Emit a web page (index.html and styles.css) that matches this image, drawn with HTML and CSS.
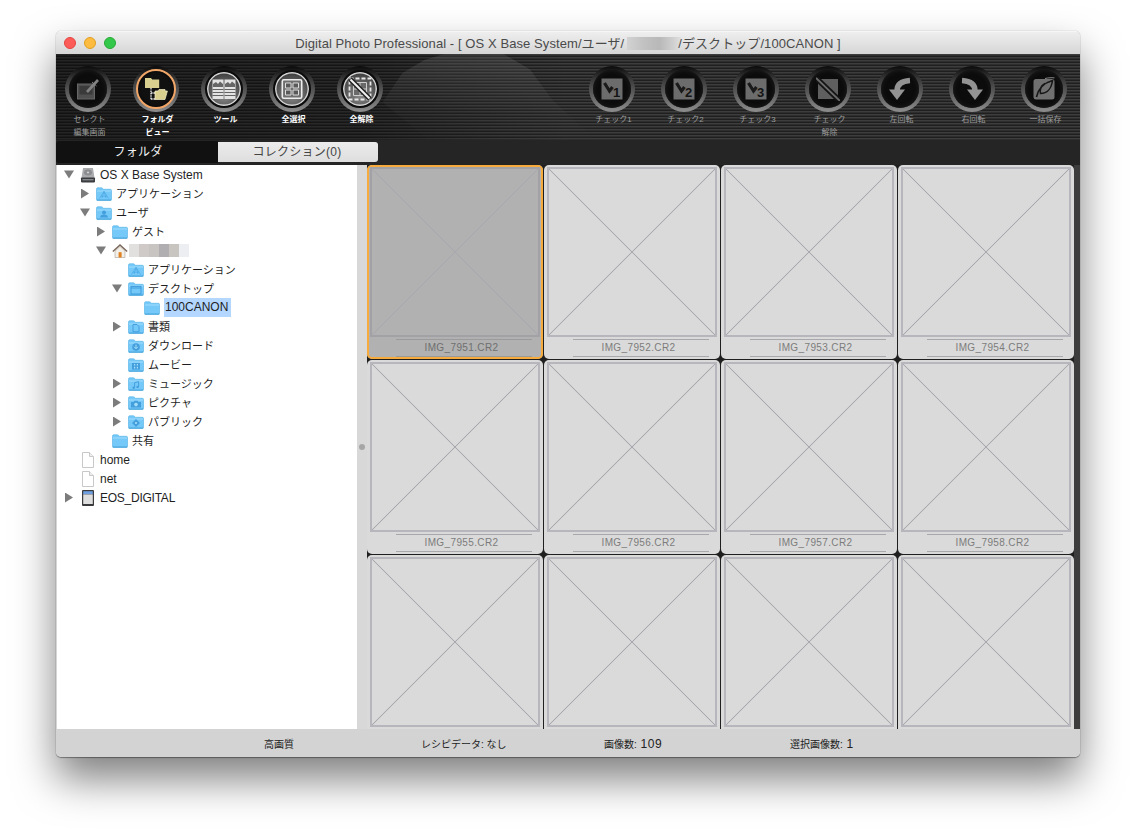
FILE: index.html
```html
<!DOCTYPE html>
<html lang="ja">
<head>
<meta charset="utf-8">
<title>Digital Photo Professional</title>
<link rel="stylesheet" href="styles.css">
</head>
<body>
<svg class="sprite" width="0" height="0" aria-hidden="true">
  <symbol id="folder" viewBox="0 0 16 14">
    <path d="M.5 2.2C.5 1.3 1 .8 1.8.8h3.6c.6 0 .9.2 1.2.6l.7.9h7c.8 0 1.2.5 1.2 1.2v8.8c0 .8-.5 1.2-1.2 1.2H1.7c-.8 0-1.2-.4-1.2-1.2z" fill="#74c9f9" stroke="#5fb7ea" stroke-width=".7"/>
    <path d="M1 4h14" stroke="#a8e0fa" stroke-width=".9"/>
    <path d="M.8 13h14.4" stroke="#4ba3dc" stroke-width="1"/>
  </symbol>
  <symbol id="g-app" viewBox="0 0 16 14"><path d="M3.4 11.5 8 4.4l4.6 7.1M5 9.2h6M8 4.4l-2 6.6M8 4.4l2 6.6" fill="none" stroke="#4aa6e2" stroke-width=".7"/></symbol>
  <symbol id="g-user" viewBox="0 0 16 14"><circle cx="8" cy="6.4" r="2" fill="#459fdc"/><path d="M4 11.5c.4-2.4 2-3 4-3s3.6.6 4 3z" fill="#459fdc"/></symbol>
  <symbol id="g-win" viewBox="0 0 16 14"><rect x="3" y="4.4" width="10" height="7.6" fill="none" stroke="#3f9cdb" stroke-width="1"/><path d="M3 6h10" stroke="#3f9cdb" stroke-width="1"/></symbol>
  <symbol id="g-doc" viewBox="0 0 16 14"><path d="M5 4.5h4l2 2v5.3H5z" fill="none" stroke="#459fdc" stroke-width="1"/></symbol>
  <symbol id="g-dl" viewBox="0 0 16 14"><circle cx="8" cy="8" r="3.8" fill="#459fdc"/><path d="M8 5.6v3.6M6.2 7.8 8 9.8l1.8-2" fill="none" stroke="#a4def9" stroke-width="1"/></symbol>
  <symbol id="g-mov" viewBox="0 0 16 14"><rect x="4" y="5" width="8" height="6.6" fill="#459fdc"/><path d="M6 6h1.2v1.6H6zM8.8 6H10v1.6H8.8zM6 8.8h1.2v1.6H6zM8.8 8.8H10v1.6H8.8z" fill="#a4def9"/></symbol>
  <symbol id="g-mus" viewBox="0 0 16 14"><path d="M6.6 10.8V5.6l4-1v5.2" fill="none" stroke="#459fdc" stroke-width="1"/><circle cx="5.6" cy="10.8" r="1.2" fill="#459fdc"/><circle cx="9.6" cy="9.9" r="1.2" fill="#459fdc"/></symbol>
  <symbol id="g-cam" viewBox="0 0 16 14"><path d="M3 6h2.6l.8-1.2h3.2L10.4 6H13v5.6H3z" fill="#459fdc"/><circle cx="8" cy="8.6" r="1.8" fill="#a4def9"/></symbol>
  <symbol id="g-pub" viewBox="0 0 16 14"><path d="M8 4 12 8l-4 4-4-4z" fill="#459fdc"/><circle cx="8" cy="8" r="1.1" fill="#a4def9"/></symbol>
  <symbol id="disk" viewBox="0 0 16 16">
    <path d="M3 1h10l1.5 10h-13z" fill="#a9abad"/>
    <ellipse cx="8" cy="5.4" rx="4" ry="3" fill="#8b8d90"/>
    <ellipse cx="8" cy="5.4" rx="1.2" ry=".9" fill="#cfd0d1"/>
    <rect x="1" y="10.4" width="14" height="5" rx=".8" fill="#3a3c40"/>
    <path d="M2.5 12.8h11" stroke="#a3a5a8" stroke-width="1"/>
  </symbol>
  <symbol id="home" viewBox="0 0 16 14">
    <path d="M3 7v6.5h10V7L8 2.5z" fill="#f2efe9" stroke="#a89f94" stroke-width=".6"/>
    <path d="M.8 7.6 8 1l7.2 6.6" fill="none" stroke="#7a6557" stroke-width="1.3"/>
    <rect x="6.6" y="8.2" width="3" height="5.3" fill="#e07f1f"/>
  </symbol>
  <symbol id="page" viewBox="0 0 16 16">
    <path d="M2.5.5h7l4 4v11h-11z" fill="#fff" stroke="#c8c8c8"/>
    <path d="M9.5.5v4h4" fill="#f0f0f0" stroke="#c8c8c8"/>
  </symbol>
  <symbol id="card" viewBox="0 0 16 16">
    <rect x="2" y="0" width="12" height="16" rx="1" fill="#3a3a3c"/>
    <rect x="3.2" y="1.2" width="9.6" height="3" fill="#6f9fe0"/>
    <rect x="3.2" y="4.4" width="9.6" height="9.6" fill="#dedede"/>
  </symbol>
  <symbol id="t-edit" viewBox="0 0 24 24">
    <rect x="1.5" y="7" width="17" height="15" fill="#4f4f4f" stroke="#676767" stroke-width="1"/>
    <rect x="3.5" y="9" width="13" height="8.5" fill="#3a3a3a"/>
    <path d="M11 15 22 3" stroke="#828282" stroke-width="2.6"/>
    <path d="M16 5l4.5 4" stroke="#828282" stroke-width="1"/>
  </symbol>
  <symbol id="t-folder" viewBox="0 0 24 24">
    <path d="M1 1h6l1.2 1.6h7V11H1z" fill="#d9d08f"/>
    <path d="M7 11v12M7 16h5M7 22h4" stroke="#eee" stroke-width="1.3" stroke-dasharray="1.6 .8" fill="none"/>
    <path d="M11 14h3l1-1.5h6V14h2.4l-2.4 8.5H11z" fill="#d9d08f" stroke="#f6f1c9" stroke-width=".7"/>
  </symbol>
  <symbol id="t-tool" viewBox="0 0 24 24">
    <rect x=".5" y="2.5" width="11" height="19.5" fill="#e3e3e3"/>
    <rect x="12.5" y="2.5" width="11" height="19.5" fill="#e3e3e3"/>
    <path d="M1 7 4 5l2 2 2-2.5 3 2.5v3H1zM13 7l3-2 2 2 2-2.5L23 7v3H13z" fill="#666"/>
    <path d="M.5 12.5h11M.5 15.5h11M.5 18.5h11M12.5 12.5h11M12.5 15.5h11M12.5 18.5h11" stroke="#555" stroke-width=".9"/>
  </symbol>
  <symbol id="t-all" viewBox="0 0 24 24">
    <rect x="2.300" y="2.800" width="19.400" height="18.400" rx="1.500" fill="#6e6e6e" stroke="#ececec" stroke-width="1.600"/>
    <path d="M5.500 6h5.500v5H5.500zM13 6h5.500v5H13zM5.500 13H11v5H5.500zM13 13h5.500v5H13z" fill="#595959" stroke="#dcdcdc" stroke-width="1"/>
  </symbol>
  <symbol id="t-none" viewBox="0 0 24 24">
    <rect x="1.500" y="1.500" width="21" height="21" fill="none" stroke="#e8e8e8" stroke-width="1.800" stroke-dasharray="4 2"/>
    <path d="M5.500 5.500h13v13h-13z" fill="#6a6a6a" stroke="#cfcfcf" stroke-width="1"/>
    <path d="M12 5.500v13M5.500 12h13" stroke="#cfcfcf" stroke-width="1"/>
    <path d="M2 2l20 20" stroke="#222" stroke-width="5"/>
    <path d="M2.500 2.500l19 19" stroke="#f2f2f2" stroke-width="2"/>
  </symbol>
  <symbol id="t-check" viewBox="0 0 24 24">
    <rect x="1.500" y="1.500" width="21" height="21" fill="#6c6c6c"/>
    <path d="M4.500 6l5 8 3-4" fill="none" stroke="#1a1a1a" stroke-width="3.200"/>
  </symbol>
  <symbol id="t-cx" viewBox="0 0 24 24">
    <rect x="2" y="2" width="20" height="20" fill="#5f5f5f"/>
    <path d="M0 1l24 23" stroke="#141414" stroke-width="5.500"/>
    <path d="M0 1l24 23" stroke="#6d6d6d" stroke-width="1.800"/>
  </symbol>
  <symbol id="t-left" viewBox="0 0 24 24">
    <path d="M22 3.500C13 4 9 8 9 14" fill="none" stroke="#939393" stroke-width="5.500"/>
    <path d="M1 12.500h16L9 23z" fill="#939393"/>
  </symbol>
  <symbol id="t-right" viewBox="0 0 24 24">
    <path d="M2 3.500C11 4 15 8 15 14" fill="none" stroke="#939393" stroke-width="5.500"/>
    <path d="M23 12.500H7L15 23z" fill="#939393"/>
  </symbol>
  <symbol id="t-save" viewBox="0 0 24 24">
    <rect x="1.500" y="2" width="21" height="20.500" rx="2.500" fill="#707070"/>
    <path d="M4.500 20c2-9 7-14 16-16.500-1 8-5.500 13-12 13-1-4.500 1-8 4.500-10" fill="none" stroke="#161616" stroke-width="1.600"/>
    <path d="M13 1.500c4-.8 6-1 9.500-.6" stroke="#8a8a8a" stroke-width="1" fill="none"/>
  </symbol>
</svg>

<main class="window">
  <header class="titlebar">
    <div class="lights"><i class="light red"></i><i class="light amber"></i><i class="light green"></i></div>
    <div class="title">Digital Photo Professional - [ OS X Base System/ユーザ/<span class="title-blur"></span>/デスクトップ/100CANON ]</div>
  </header>

  <section class="toolbar">
    <div class="tool-group left">
      <div class="tool dim"><div class="ring"><svg class="tool-icon" viewBox="0 0 24 24"><use href="#t-edit"/></svg></div><span class="tool-label">セレクト<br>編集画面</span></div>
      <div class="tool active"><div class="ring"><svg class="tool-icon" viewBox="0 0 24 24"><use href="#t-folder"/></svg></div><span class="tool-label">フォルダ<br>ビュー</span></div>
      <div class="tool on"><div class="ring"><svg class="tool-icon" viewBox="0 0 24 24"><use href="#t-tool"/></svg></div><span class="tool-label">ツール</span></div>
      <div class="tool on"><div class="ring"><svg class="tool-icon" viewBox="0 0 24 24"><use href="#t-all"/></svg></div><span class="tool-label">全選択</span></div>
      <div class="tool on"><div class="ring"><svg class="tool-icon" viewBox="0 0 24 24"><use href="#t-none"/></svg></div><span class="tool-label">全解除</span></div>
    </div>
    <div class="tool-group right">
      <div class="tool dim"><div class="ring"><svg class="tool-icon" viewBox="0 0 24 24"><use href="#t-check"/><text x="16.500" y="19.500" class="chk">1</text></svg></div><span class="tool-label">チェック1</span></div>
      <div class="tool dim"><div class="ring"><svg class="tool-icon" viewBox="0 0 24 24"><use href="#t-check"/><text x="16.500" y="19.500" class="chk">2</text></svg></div><span class="tool-label">チェック2</span></div>
      <div class="tool dim"><div class="ring"><svg class="tool-icon" viewBox="0 0 24 24"><use href="#t-check"/><text x="16.500" y="19.500" class="chk">3</text></svg></div><span class="tool-label">チェック3</span></div>
      <div class="tool dim"><div class="ring"><svg class="tool-icon" viewBox="0 0 24 24"><use href="#t-cx"/></svg></div><span class="tool-label">チェック<br>解除</span></div>
      <div class="tool dim"><div class="ring"><svg class="tool-icon" viewBox="0 0 24 24"><use href="#t-left"/></svg></div><span class="tool-label">左回転</span></div>
      <div class="tool dim"><div class="ring"><svg class="tool-icon" viewBox="0 0 24 24"><use href="#t-right"/></svg></div><span class="tool-label">右回転</span></div>
      <div class="tool dim"><div class="ring"><svg class="tool-icon" viewBox="0 0 24 24"><use href="#t-save"/></svg></div><span class="tool-label">一括保存</span></div>
    </div>
  </section>

  <nav class="tabs">
    <div class="tab tab-active">フォルダ</div>
    <div class="tab tab-idle">コレクション(0)</div>
  </nav>

  <div class="main">
    <aside class="tree">
      <div class="row d0"><i class="tw open"></i><svg class="ico"><use href="#disk"/></svg><span class="lat">OS X Base System</span></div>
      <div class="row d1"><i class="tw shut"></i><span class="fld"><svg class="ico"><use href="#folder"/></svg><svg class="ico over"><use href="#g-app"/></svg></span><span class="ja">アプリケーション</span></div>
      <div class="row d1"><i class="tw open"></i><span class="fld"><svg class="ico"><use href="#folder"/></svg><svg class="ico over"><use href="#g-user"/></svg></span><span class="ja">ユーザ</span></div>
      <div class="row d2"><i class="tw shut"></i><span class="fld"><svg class="ico"><use href="#folder"/></svg></span><span class="ja">ゲスト</span></div>
      <div class="row d2"><i class="tw open"></i><svg class="ico"><use href="#home"/></svg><span class="name-blur"><b class="n1"></b><b class="n2"></b><b class="n3"></b><b class="n4"></b><b class="n5"></b><b class="n6"></b></span></div>
      <div class="row d3"><i class="tw"></i><span class="fld"><svg class="ico"><use href="#folder"/></svg><svg class="ico over"><use href="#g-app"/></svg></span><span class="ja">アプリケーション</span></div>
      <div class="row d3"><i class="tw open"></i><span class="fld"><svg class="ico"><use href="#folder"/></svg><svg class="ico over"><use href="#g-win"/></svg></span><span class="ja">デスクトップ</span></div>
      <div class="row d4"><i class="tw"></i><span class="fld"><svg class="ico"><use href="#folder"/></svg></span><span class="lat sel">100CANON</span></div>
      <div class="row d3"><i class="tw shut"></i><span class="fld"><svg class="ico"><use href="#folder"/></svg><svg class="ico over"><use href="#g-doc"/></svg></span><span class="ja">書類</span></div>
      <div class="row d3"><i class="tw"></i><span class="fld"><svg class="ico"><use href="#folder"/></svg><svg class="ico over"><use href="#g-dl"/></svg></span><span class="ja">ダウンロード</span></div>
      <div class="row d3"><i class="tw"></i><span class="fld"><svg class="ico"><use href="#folder"/></svg><svg class="ico over"><use href="#g-mov"/></svg></span><span class="ja">ムービー</span></div>
      <div class="row d3"><i class="tw shut"></i><span class="fld"><svg class="ico"><use href="#folder"/></svg><svg class="ico over"><use href="#g-mus"/></svg></span><span class="ja">ミュージック</span></div>
      <div class="row d3"><i class="tw shut"></i><span class="fld"><svg class="ico"><use href="#folder"/></svg><svg class="ico over"><use href="#g-cam"/></svg></span><span class="ja">ピクチャ</span></div>
      <div class="row d3"><i class="tw shut"></i><span class="fld"><svg class="ico"><use href="#folder"/></svg><svg class="ico over"><use href="#g-pub"/></svg></span><span class="ja">パブリック</span></div>
      <div class="row d2"><i class="tw"></i><span class="fld"><svg class="ico"><use href="#folder"/></svg></span><span class="ja">共有</span></div>
      <div class="row d0"><i class="tw"></i><svg class="ico"><use href="#page"/></svg><span class="lat">home</span></div>
      <div class="row d0"><i class="tw"></i><svg class="ico"><use href="#page"/></svg><span class="lat">net</span></div>
      <div class="row d0"><i class="tw shut"></i><svg class="ico"><use href="#card"/></svg><span class="lat tight">EOS_DIGITAL</span></div>
    </aside>

    <div class="splitter"><i class="grip"></i></div>

    <div class="grid">
      <figure class="cell selected"><div class="thumb"></div><figcaption>IMG_7951.CR2</figcaption></figure>
      <figure class="cell"><div class="thumb"></div><figcaption>IMG_7952.CR2</figcaption></figure>
      <figure class="cell"><div class="thumb"></div><figcaption>IMG_7953.CR2</figcaption></figure>
      <figure class="cell"><div class="thumb"></div><figcaption>IMG_7954.CR2</figcaption></figure>
      <figure class="cell"><div class="thumb"></div><figcaption>IMG_7955.CR2</figcaption></figure>
      <figure class="cell"><div class="thumb"></div><figcaption>IMG_7956.CR2</figcaption></figure>
      <figure class="cell"><div class="thumb"></div><figcaption>IMG_7957.CR2</figcaption></figure>
      <figure class="cell"><div class="thumb"></div><figcaption>IMG_7958.CR2</figcaption></figure>
      <figure class="cell"><div class="thumb"></div></figure>
      <figure class="cell"><div class="thumb"></div></figure>
      <figure class="cell"><div class="thumb"></div></figure>
      <figure class="cell"><div class="thumb"></div></figure>
    </div>

    <div class="scrollbar"></div>
  </div>

  <footer class="status">
    <span class="st st1">高画質</span>
    <span class="st st2">レシピデータ: なし</span>
    <span class="st st3">画像数: <span class="num">109</span></span>
    <span class="st st4">選択画像数: <span class="num">1</span></span>
  </footer>
</main>
</body>
</html>
```

FILE: styles.css
```css
* { box-sizing: border-box; }

html, body { margin: 0; height: 100%; }

body {
  background: #fff;
  padding: 31px 0 0 56px;
  overflow: hidden;
  font-family: "Liberation Sans", "Noto Sans CJK JP", sans-serif;
  color: #222;
}

.sprite { position: absolute; }

.window {
  width: 1024px;
  height: 726px;
  border-radius: 5px;
  display: flex;
  flex-direction: column;
  overflow: hidden;
  box-shadow: 0 0 1px rgba(0, 0, 0, .45), 0 1px 1px rgba(0, 0, 0, .35), 0 22px 42px rgba(0, 0, 0, .5);
}

/* title bar */
.titlebar {
  height: 23px;
  flex: none;
  display: flex;
  align-items: center;
  position: relative;
  background: linear-gradient(#eeeeee, #d6d6d6);
  border-top: 1px solid #f6f6f6;
}

.lights { display: flex; gap: 8px; padding-left: 8px; }

.light { width: 12px; height: 12px; border-radius: 50%; display: block; }
.red { background: #fc5b57; border: 1px solid #e5443f; }
.amber { background: #fdbb3f; border: 1px solid #dfa023; }
.green { background: #34c84a; border: 1px solid #27aa35; }

.title {
  position: absolute;
  left: 0;
  right: 0;
  top: 1px;
  text-align: center;
  font-size: 13px;
  letter-spacing: .08px;
  line-height: 22px;
  color: #4a4a4a;
  white-space: nowrap;
}

.title-blur {
  display: inline-block;
  width: 54px;
  height: 13px;
  margin: 0 -3px 0 3px;
  vertical-align: -2px;
  background: linear-gradient(90deg, #d2d2d2, #c2c2c2 30%, #b8b8b8 60%, #cfcfcf 85%, #e0e0e0);
}

/* toolbar */
.toolbar {
  height: 86px;
  flex: none;
  position: relative;
  display: flex;
  justify-content: space-between;
  padding: 12px 6px 0 2px;
  background:
    linear-gradient(90deg, rgba(0, 0, 0, .42), rgba(0, 0, 0, .32) 30%, transparent 50%),
    repeating-linear-gradient(#3d3d3d 0 1px, #2e2e2e 1px 2px, #1f1f1f 2px 3px);
}

.toolbar::before {
  content: "";
  position: absolute;
  left: 320px;
  top: 0;
  width: 220px;
  height: 86px;
  clip-path: polygon(3% 56%, 12% 22%, 22% 7%, 31% 0, 58% 0, 70% 18%, 80% 53%, 95% 88%, 100% 100%, 24% 100%);
  background: linear-gradient(rgba(150, 150, 150, .2), rgba(90, 90, 90, .08) 70%, rgba(90, 90, 90, .02));
  filter: blur(2px);
}

.tool-group { display: flex; position: relative; }
.tool-group.left { gap: 8px; }
.tool-group.right { gap: 12px; }

.tool {
  width: 60px;
  display: flex;
  flex-direction: column;
  align-items: center;
}

.ring {
  width: 46px;
  height: 46px;
  border-radius: 50%;
  display: flex;
  align-items: center;
  justify-content: center;
  flex: none;
  background: linear-gradient(#0b0b0b, #3b3b3b 30%, #5c5c5c 60%, #8e8e8e);
  position: relative;
}

.ring::before {
  content: "";
  position: absolute;
  inset: 4px;
  border-radius: 50%;
  background: #0c0c0c;
  box-shadow: inset 0 0 5px #1f1f1f;
}

.tool.on .ring::before {
  background: radial-gradient(circle at 50% 65%, #8f8f8f, #3f3f3f 75%);
  border: 2px solid #0b0b0b;
  box-shadow: inset 0 0 0 1.5px #d2d2d2;
}

.tool.active .ring::before {
  inset: 3px;
  background: #101010;
  border: 2px solid #f0a668;
  box-shadow: inset 0 0 3px #000;
}

.tool-icon {
  width: 24px;
  height: 24px;
  position: relative;
  display: block;
}

.chk {
  font: bold 13px "Liberation Sans", sans-serif;
  fill: #141414;
  text-anchor: middle;
}

.tool-label {
  font-size: 8px;
  line-height: 13px;
  padding-left: 3px;
  text-align: center;
  font-weight: 700;
  white-space: nowrap;
  color: #fff;
  margin-top: 1px;
}

.tool.dim .tool-label { color: #9c9c9c; font-weight: 400; }

/* tabs */
.tabs {
  height: 25px;
  flex: none;
  display: flex;
  padding-top: 1px;
  background: #252525;
}

.tab {
  height: 22px;
  width: 162px;
  padding-left: 2px;
  font-size: 12px;
  line-height: 22px;
  letter-spacing: .25px;
  text-align: center;
}

.tab-active { background: #111; color: #f2f2f2; border-radius: 3px 0 0 3px; }

.tab-idle {
  width: 160px;
  height: 20px;
  margin-top: 1px;
  padding: 0 2px 0 0;
  line-height: 20px;
  background: linear-gradient(#ececec, #dedede);
  color: #444;
  border-radius: 0 3px 3px 0;
}

/* main area */
.main {
  flex: 1;
  min-height: 0;
  display: flex;
}

.tree {
  width: 301px;
  flex: none;
  background: #fff;
  border-left: 1px solid #d6d6d6;
  overflow: hidden;
}

.row {
  height: 19px;
  display: flex;
  align-items: center;
  font-size: 11px;
  color: #1f1f1f;
  white-space: nowrap;
}

.d0 { padding-left: 7px; }
.d1 { padding-left: 23px; }
.d2 { padding-left: 39px; }
.d3 { padding-left: 55px; }
.d4 { padding-left: 71px; }

.tw {
  width: 10px;
  height: 10px;
  flex: none;
  margin-right: 6px;
  display: block;
}

.tw.open { background: #7c7c7c; clip-path: polygon(0 10%, 100% 10%, 50% 90%); }
.tw.shut { background: #7c7c7c; clip-path: polygon(10% 0, 90% 50%, 10% 100%); }

.ico { width: 16px; height: 16px; flex: none; display: block; margin-right: 4px; }

.fld { position: relative; width: 16px; height: 14px; flex: none; margin-right: 4px; }
.fld .ico { width: 16px; height: 14px; margin: 0; }
.fld .over { position: absolute; left: 0; top: 0; }

.ja { margin-bottom: 2px; }

.lat { font-size: 12px; line-height: 19px; }
.row > .lat { padding-top: 1px; }
.tight { letter-spacing: -.25px; }

.row > .sel { background: #b3d7ff; padding: 0 1px; width: 67px; }

.name-blur { display: flex; height: 13px; filter: blur(.6px); margin-left: -3px; }
.name-blur b { width: 10px; display: block; }
.n1 { background: #e2e0de; }
.n2 { background: #cfcac8; }
.n3 { background: #c8c4c2; }
.n4 { background: #b0aeb0; }
.n5 { background: #c8c4c0; }
.n6 { background: #eceef2; }

.splitter {
  width: 10px;
  flex: none;
  background: #d8d8d8;
  display: flex;
  align-items: center;
  justify-content: center;
}

.grip { width: 6px; height: 6px; border-radius: 50%; background: #a6a6a6; display: block; }

.grid {
  width: 707px;
  flex: none;
  background: #1f1f1f;
  overflow: hidden;
  display: grid;
  grid-template-columns: repeat(4, 176px);
  grid-auto-rows: 194px;
  gap: 1px;
}

.cell {
  margin: 0;
  padding: 2px 3px 0;
  background: #dadada;
  border-radius: 5px;
}

.thumb {
  width: 170px;
  height: 170px;
  border: 2px solid #b6b6bc;
  background:
    linear-gradient(45deg, transparent calc(50% - .8px), #a8a8ae calc(50% - .15px), #a8a8ae calc(50% + .15px), transparent calc(50% + .8px)),
    linear-gradient(-45deg, transparent calc(50% - .8px), #a8a8ae calc(50% - .15px), #a8a8ae calc(50% + .15px), transparent calc(50% + .8px));
}

figcaption {
  width: 136px;
  height: 18px;
  margin: 2px 0 0 26px;
  padding-right: 5px;
  border-top: 1px solid #a8a8ac;
  border-bottom: 1px solid #a8a8ac;
  font-size: 10px;
  letter-spacing: .38px;
  line-height: 16px;
  text-align: center;
  color: #7c7c7c;
}

.cell.selected {
  background: #b1b1b1;
  box-shadow: inset 0 0 0 2px #f6ab3c;
}

.selected .thumb { border-color: #a2a2a6; }
.selected figcaption { color: #6f6f6f; border-color: #9b9b9e; }

.scrollbar { width: 6px; flex: none; background: #3c3c3c; }

/* status */
.status {
  height: 28px;
  flex: none;
  display: flex;
  align-items: center;
  background: #d3d3d3;
  padding: 1px 0 0 208px;
  font-size: 10px;
  color: #222;
}

.st { display: block; white-space: nowrap; }
.st1 { width: 157px; }
.st2 { width: 183px; }
.st3 { width: 186px; }
.num { font-size: 12px; letter-spacing: .6px; margin-left: 1px; }
```
